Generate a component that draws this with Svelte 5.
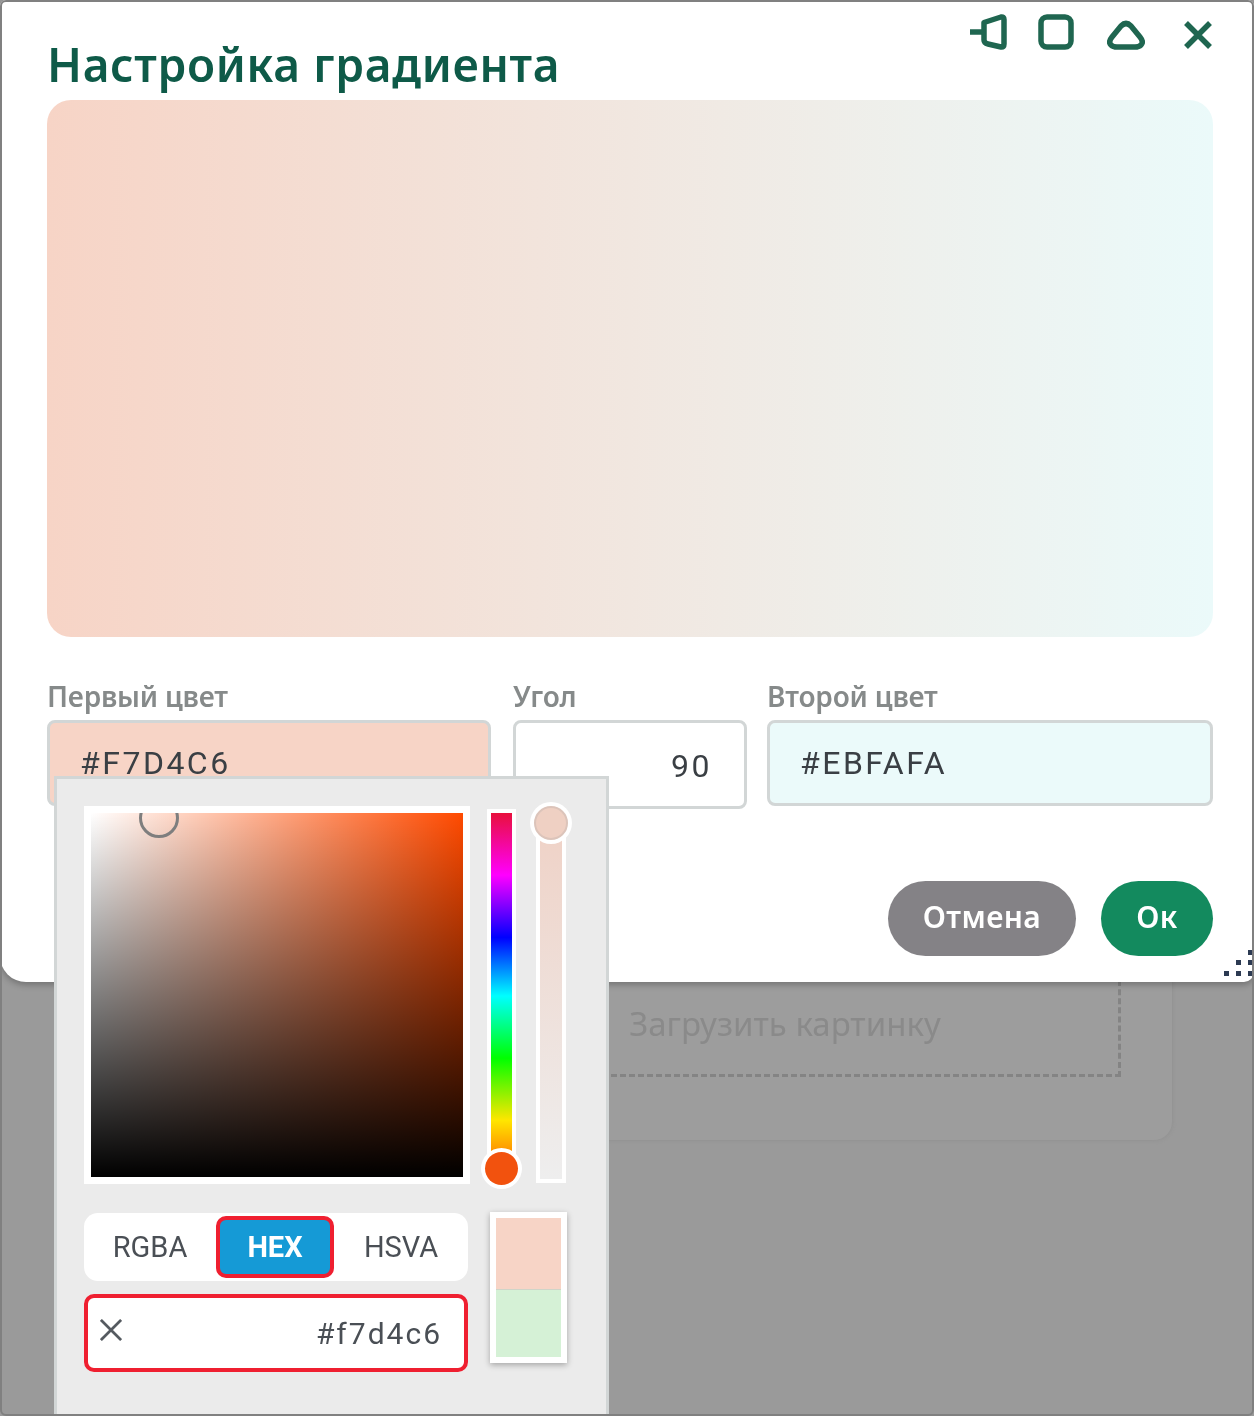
<script lang="ts">
	const fields = [
		{ label: 'Первый цвет', value: '#F7D4C6', kind: 'first' },
		{ label: 'Угол', value: '90', kind: 'angle' },
		{ label: 'Второй цвет', value: '#EBFAFA', kind: 'second' }
	];
	const modes = ['RGBA', 'HEX', 'HSVA'];
	let mode = $state('HEX');
</script>

<div class="page">
	<div class="backdrop">
		<div class="upload-card">
			<div class="dropzone">Загрузить картинку</div>
		</div>
	</div>

	<section class="modal">
		<header class="head">
			<h1>Настройка градиента</h1>
			<div class="tools">
				<svg class="pin" viewBox="0 0 38 36" fill="none">
					<path d="M1 18H15M15 8.5L32 3Q35 2.5 35 5.5V30Q35 33.5 32 33L19 30Q15 29 15 26V8.5Z" />
				</svg>
				<svg class="square" viewBox="0 0 36 36" fill="none">
					<rect x="3" y="3" width="30" height="30" rx="6" />
				</svg>
				<svg class="tri" viewBox="0 0 38 30" fill="none">
					<path d="M14 6Q19 1 24 6L33 17Q37 22 34 25Q32 27 28 27H10Q6 27 4 25Q1 22 5 17Z" />
				</svg>
				<svg class="close" viewBox="0 0 30 30" fill="none">
					<path d="M3 3L27 27M27 3L3 27" />
				</svg>
			</div>
		</header>

		<div class="preview"></div>

		<div class="fields">
			{#each fields as field}
				<div class="field">
					<span class="label">{field.label}</span>
					<div class="input {field.kind}">{field.value}</div>
				</div>
			{/each}

			<div class="picker">
				<div class="sliders">
					<div class="sv">
						<div class="sv-handle"></div>
					</div>
					<div class="hue">
						<div class="hue-handle"></div>
					</div>
					<div class="alpha">
						<div class="alpha-handle"></div>
					</div>
				</div>
				<div class="controls">
					<div class="control-col">
						<div class="modes">
							{#each modes as m}
								<button class:active={mode === m} onclick={() => (mode = m)}>{m}</button>
							{/each}
						</div>
						<div class="hex-input">
							<svg viewBox="0 0 24 24" fill="none">
								<path d="M1 1L23 23M23 1L1 23" />
							</svg>
							<span>#f7d4c6</span>
						</div>
					</div>
					<div class="swatch">
						<div class="now"></div>
						<div class="prev"></div>
					</div>
				</div>
			</div>
		</div>

		<footer class="actions">
			<button class="cancel">Отмена</button>
			<button class="ok">Ок</button>
		</footer>

		<svg class="grip" viewBox="0 0 32 28">
			<g fill="#2c3a52">
				<rect x="26" y="0" width="5" height="5" />
				<rect x="14" y="10" width="5" height="5" />
				<rect x="26" y="10" width="5" height="5" />
				<rect x="2" y="21" width="5" height="5" />
				<rect x="14" y="21" width="5" height="5" />
				<rect x="26" y="21" width="5" height="5" />
			</g>
		</svg>
	</section>

	<div class="frame"></div>
</div>

<style>
	:global(body) {
		margin: 0;
		background: #fff;
		font-family: 'Noto Sans', sans-serif;
	}

	* {
		box-sizing: border-box;
	}

	.page {
		position: relative;
		width: 1254px;
		height: 1416px;
		overflow: hidden;
		background: #9a9a9a;
		filter: blur(0.5px);
	}

	.frame {
		position: absolute;
		inset: 0;
		border: 2px solid #808080;
		border-radius: 6px;
		pointer-events: none;
	}

	.backdrop {
		padding: 920px 82px 0 398px;
	}

	.upload-card {
		height: 220px;
		padding: 51px 51px 63px;
		background: #9d9d9d;
		border-radius: 0 0 18px 18px;
		box-shadow: 0 0 4px #8e8e8e;
	}

	.dropzone {
		height: 106px;
		display: flex;
		align-items: center;
		justify-content: center;
		border: 3px dashed #848484;
		font-size: 33px;
		padding-bottom: 2px;
		color: #8a8a8a;
	}

	.modal {
		position: absolute;
		top: 0;
		left: 0;
		width: 1254px;
		height: 982px;
		padding: 0 41px 0 47px;
		background: #fff;
		border-radius: 6px 6px 10px 26px;
		box-shadow: 0 3px 6px rgba(0, 0, 0, 0.25);
	}

	.head {
		height: 100px;
		display: flex;
		justify-content: space-between;
		align-items: flex-start;
	}

	h1 {
		margin: 33px 0 0;
		font-size: 46px;
		line-height: 62px;
		font-weight: 600;
		letter-spacing: 0.7px;
		white-space: nowrap;
		color: #0e5a48;
	}

	.tools {
		display: flex;
		align-items: flex-end;
		height: 50px;
	}

	.tools svg {
		stroke: #1f6650;
		stroke-width: 5.5;
		stroke-linejoin: round;
	}

	.pin {
		width: 38px;
		height: 36px;
		margin-right: 31px;
	}

	.square {
		width: 36px;
		height: 36px;
		margin-right: 33px;
	}

	.tri {
		width: 38px;
		height: 30px;
		margin-right: 38px;
	}

	.close {
		width: 30px;
		height: 30px;
	}

	.preview {
		height: 537px;
		border-radius: 24px;
		background: linear-gradient(90deg, #f7d4c6, #ebfafa);
	}

	.fields {
		position: relative;
		display: grid;
		grid-template-columns: 466px 254px 446px;
		margin-top: 41px;
	}

	.field {
		display: flex;
		flex-direction: column;
	}

	.field:nth-child(1) {
		padding-right: 22px;
	}

	.field:nth-child(2) {
		padding-right: 20px;
	}

	.label {
		font-size: 28px;
		line-height: 36px;
		font-weight: 600;
		letter-spacing: -0.2px;
		color: #868a8a;
		margin-bottom: 6px;
	}

	.input {
		height: 86px;
		padding: 0 32px 0 30px;
		display: flex;
		align-items: center;
		border: 3px solid #d2d6d6;
		border-radius: 8px;
		font-family: 'Roboto', sans-serif;
		font-size: 32px;
		letter-spacing: 2.5px;
		color: #3a3f44;
	}

	.input.first {
		background: #f7d4c6;
	}

	.input.second {
		background: #ebfafa;
	}

	.input.angle {
		justify-content: flex-end;
		height: 89px;
		padding-top: 3px;
	}

	.picker {
		position: absolute;
		top: 98px;
		left: 7px;
		width: 555px;
		height: 660px;
		padding: 27px 27px 0;
		background: #ebebeb;
		border: 3px solid #d2d6d6;
	}

	.sliders {
		display: flex;
		align-items: flex-start;
	}

	.sv {
		position: relative;
		width: 386px;
		height: 378px;
		border: 7px solid #fff;
		overflow: hidden;
		background:
			linear-gradient(to top, #000, transparent),
			linear-gradient(to right, #fff, #ff4a00);
	}

	.sv-handle {
		position: absolute;
		left: 48px;
		top: -15px;
		width: 40px;
		height: 40px;
		border: 3px solid #7e7e7e;
		border-radius: 50%;
	}

	.hue {
		position: relative;
		width: 29px;
		height: 374px;
		margin: 3px 0 0 17px;
		border: 4px solid #fff;
		background: linear-gradient(to top, #ff4a00, #ffe600 16%, #00ff00 33%, #00ffff 50%, #0000ff 66%, #ff00ff 83%, #e8103c);
	}

	.hue-handle {
		position: absolute;
		left: -6px;
		bottom: -6px;
		width: 33px;
		height: 33px;
		border-radius: 50%;
		background: #f2520e;
		box-shadow: 0 0 0 4px #fff;
	}

	.alpha {
		position: relative;
		width: 30px;
		height: 348px;
		margin: 29px 0 0 20px;
		border: 4px solid #fff;
		background: linear-gradient(to bottom, #efd3c8, #eeeeee);
	}

	.alpha-handle {
		position: absolute;
		left: -6px;
		top: -33px;
		width: 34px;
		height: 34px;
		border-radius: 50%;
		background: #efd0c3;
		border: 2px solid #dcc4ba;
		box-shadow: 0 0 0 4px #fff;
	}

	.controls {
		display: flex;
		align-items: flex-start;
		gap: 22px;
		margin-top: 29px;
	}

	.control-col {
		width: 384px;
		display: flex;
		flex-direction: column;
		gap: 13px;
	}

	.modes {
		height: 68px;
		padding: 3px 0;
		display: grid;
		grid-template-columns: 132px 118px 134px;
		background: #fff;
		border-radius: 14px;
	}

	.modes button {
		border: none;
		background: none;
		padding: 0;
		font-family: 'Roboto', sans-serif;
		font-size: 29px;
		color: #4a4f55;
	}

	.modes button.active {
		background: #159ad6;
		border: 4px solid #ef1f30;
		border-radius: 10px;
		font-weight: 700;
		color: #fff;
	}

	.hex-input {
		height: 78px;
		padding: 0 22px 0 12px;
		display: flex;
		align-items: center;
		justify-content: space-between;
		background: #fff;
		border: 4px solid #ef1f30;
		border-radius: 10px;
		font-family: 'Roboto', sans-serif;
		font-size: 30px;
		letter-spacing: 2px;
		color: #4a4f55;
	}

	.hex-input svg {
		width: 22px;
		height: 22px;
		margin-bottom: 6px;
		stroke: #555a60;
		stroke-width: 3;
	}

	.swatch {
		width: 77px;
		height: 151px;
		margin-top: -1px;
		border: 6px solid #fff;
		box-shadow: 0 2px 6px rgba(0, 0, 0, 0.3);
		display: flex;
		flex-direction: column;
	}

	.now {
		flex: 72;
		background: #f7d4c6;
	}

	.prev {
		flex: 67;
		background: #d5f1d6;
		border-top: 1px solid #cfd4c8;
	}

	.actions {
		position: absolute;
		top: 881px;
		right: 41px;
		display: flex;
		gap: 25px;
	}

	.actions button {
		height: 75px;
		padding: 0 0 5px;
		border: none;
		border-radius: 38px;
		font-family: 'Noto Sans', sans-serif;
		font-size: 30px;
		font-weight: 600;
		letter-spacing: 0.4px;
		color: #fff;
	}

	.cancel {
		width: 188px;
		background: #848286;
	}

	.ok {
		width: 112px;
		background: #138a5e;
	}

	.grip {
		position: absolute;
		right: 0;
		bottom: 4px;
		width: 32px;
		height: 28px;
	}
</style>
